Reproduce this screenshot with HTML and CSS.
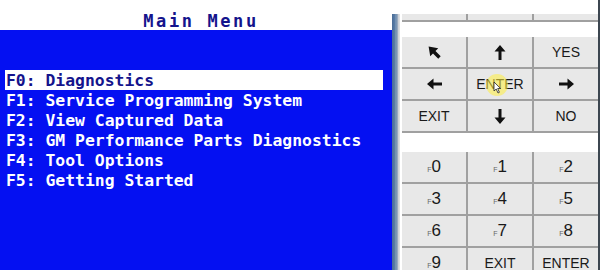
FILE: index.html
```html
<!DOCTYPE html>
<html lang="en">
<head>
    <meta charset="UTF-8">
    <title>Main Menu</title>
    <link rel="stylesheet" href="styles.css">
</head>
<body>
    <div class="screen">
        <div class="title">Main Menu</div>
        <ul class="menu">
            <li class="selected">F0: Diagnostics</li>
            <li>F1: Service Programming System</li>
            <li>F2: View Captured Data</li>
            <li>F3: GM Performance Parts Diagnostics</li>
            <li>F4: Tool Options</li>
            <li>F5: Getting Started</li>
        </ul>
    </div>

    <div class="divider"></div>

    <div class="keypad">
        <div class="keys top-row">
            <div class="key"></div><div class="key"></div><div class="key"></div>
        </div>

        <!-- navigation keys -->
        <div class="keys nav">
            <div class="key">
                <svg width="15" height="15" viewBox="0 0 14 14"><path d="M1.5 1.5 L10.5 3 L7.9 5.6 L12.8 10.5 L10.5 12.8 L5.6 7.9 L3 10.5 Z" fill="#111"/></svg>
            </div>
            <div class="key">
                <svg width="12" height="17" viewBox="0 0 12 16"><path d="M6 0.5 L11.5 7 L7.5 7 L7.5 15.5 L4.5 15.5 L4.5 7 L0.5 7 Z" fill="#111"/></svg>
            </div>
            <div class="key">YES</div>
            <div class="key">
                <svg width="17" height="12" viewBox="0 0 16 12"><path d="M0.5 6 L7 0.5 L7 4.5 L15.5 4.5 L15.5 7.5 L7 7.5 L7 11.5 Z" fill="#111"/></svg>
            </div>
            <div class="key enter">ENTER
                <span class="click"></span>
                <svg class="cursor" width="9" height="13" viewBox="0 0 9 13"><path d="M1 1 L1 10 L3.2 8 L5 12 L6.4 11.3 L4.7 7.5 L7.6 7.5 Z" fill="#fff" stroke="#222" stroke-width="0.8"/></svg>
            </div>
            <div class="key">
                <svg width="17" height="12" viewBox="0 0 16 12"><path d="M15.5 6 L9 0.5 L9 4.5 L0.5 4.5 L0.5 7.5 L9 7.5 L9 11.5 Z" fill="#111"/></svg>
            </div>
            <div class="key">EXIT</div>
            <div class="key">
                <svg width="12" height="17" viewBox="0 0 12 16"><path d="M6 15.5 L11.5 9 L7.5 9 L7.5 0.5 L4.5 0.5 L4.5 9 L0.5 9 Z" fill="#111"/></svg>
            </div>
            <div class="key">NO</div>
        </div>

        <!-- function keys -->
        <div class="keys fkeys">
            <div class="key"><small>F</small>0</div>
            <div class="key"><small>F</small>1</div>
            <div class="key"><small>F</small>2</div>
            <div class="key"><small>F</small>3</div>
            <div class="key"><small>F</small>4</div>
            <div class="key"><small>F</small>5</div>
            <div class="key"><small>F</small>6</div>
            <div class="key"><small>F</small>7</div>
            <div class="key"><small>F</small>8</div>
            <div class="key"><small>F</small>9</div>
            <div class="key word">EXIT</div>
            <div class="key word">ENTER</div>
        </div>
    </div>
</body>
</html>
```

FILE: styles.css
```css
body {
    margin: 0;
    width: 600px;
    height: 270px;
    overflow: hidden;
    display: flex;
    background-color: #ffffff;
}

/* scan tool screen */
.screen {
    width: 392px;
    display: flex;
    flex-direction: column;
}
.title {
    height: 30px;
    padding: 11px 0 0 10px;
    box-sizing: border-box;
    text-align: center;
    font-family: "DejaVu Sans Mono", monospace;
    font-size: 17px;
    font-weight: bold;
    letter-spacing: 2.6px;
    color: #14148c;
}
.menu {
    flex: 1;
    margin: 0;
    padding: 40px 0 0 5px;
    list-style: none;
    background-color: #0410f2;
}
.menu li {
    width: 378px;
    height: 20px;
    line-height: 21px;
    padding-left: 1px;
    box-sizing: border-box;
    font-family: "DejaVu Sans Mono", monospace;
    font-size: 16.4px;
    font-weight: bold;
    color: #ffffff;
    white-space: nowrap;
}
.menu li.selected {
    background-color: #ffffff;
    color: #14148c;
}

/* window edge */
.divider {
    width: 8px;
    margin-top: 14px;
    background: linear-gradient(to right, #4a6c96 0, #5a7ea8 3px, #8aa2bc 4px, #6a88aa 5px, #c8ccd2 6px, #e4e4e4 8px);
}

/* keypad */
.keypad {
    flex: 1;
    padding: 14px 0 0 2px;
    border-right: 2px solid #3c4650;
    box-sizing: border-box;
}
.keys {
    display: grid;
    grid-template-columns: 66px 66px 64px;
}
.key {
    position: relative;
    display: flex;
    justify-content: center;
    align-items: center;
    background-color: #e8e8e8;
    border-right: 2px solid #a0a0a0;
    border-bottom: 2px solid #a0a0a0;
    font-family: "Liberation Sans", Arial, sans-serif;
    font-size: 14px;
    color: #1a1a1a;
}
.key:nth-child(3n) {
    border-right: none;
}
.top-row .key {
    height: 6px;
}
.nav {
    margin-top: 15px;
    grid-auto-rows: 32px;
}
.fkeys {
    margin-top: 19px;
    grid-auto-rows: 32px;
}
.fkeys .key {
    font-size: 17px;
}
.fkeys .key small {
    font-size: 7px;
    color: #666;
    margin-top: 4px;
}
.fkeys .key.word {
    font-size: 14px;
}

/* click highlight over ENTER */
.click {
    position: absolute;
    left: 18px;
    top: 5px;
    width: 22px;
    height: 22px;
    border-radius: 50%;
    background-color: rgba(255, 238, 60, 0.55);
}
.cursor {
    position: absolute;
    left: 25px;
    top: 12px;
}
```
